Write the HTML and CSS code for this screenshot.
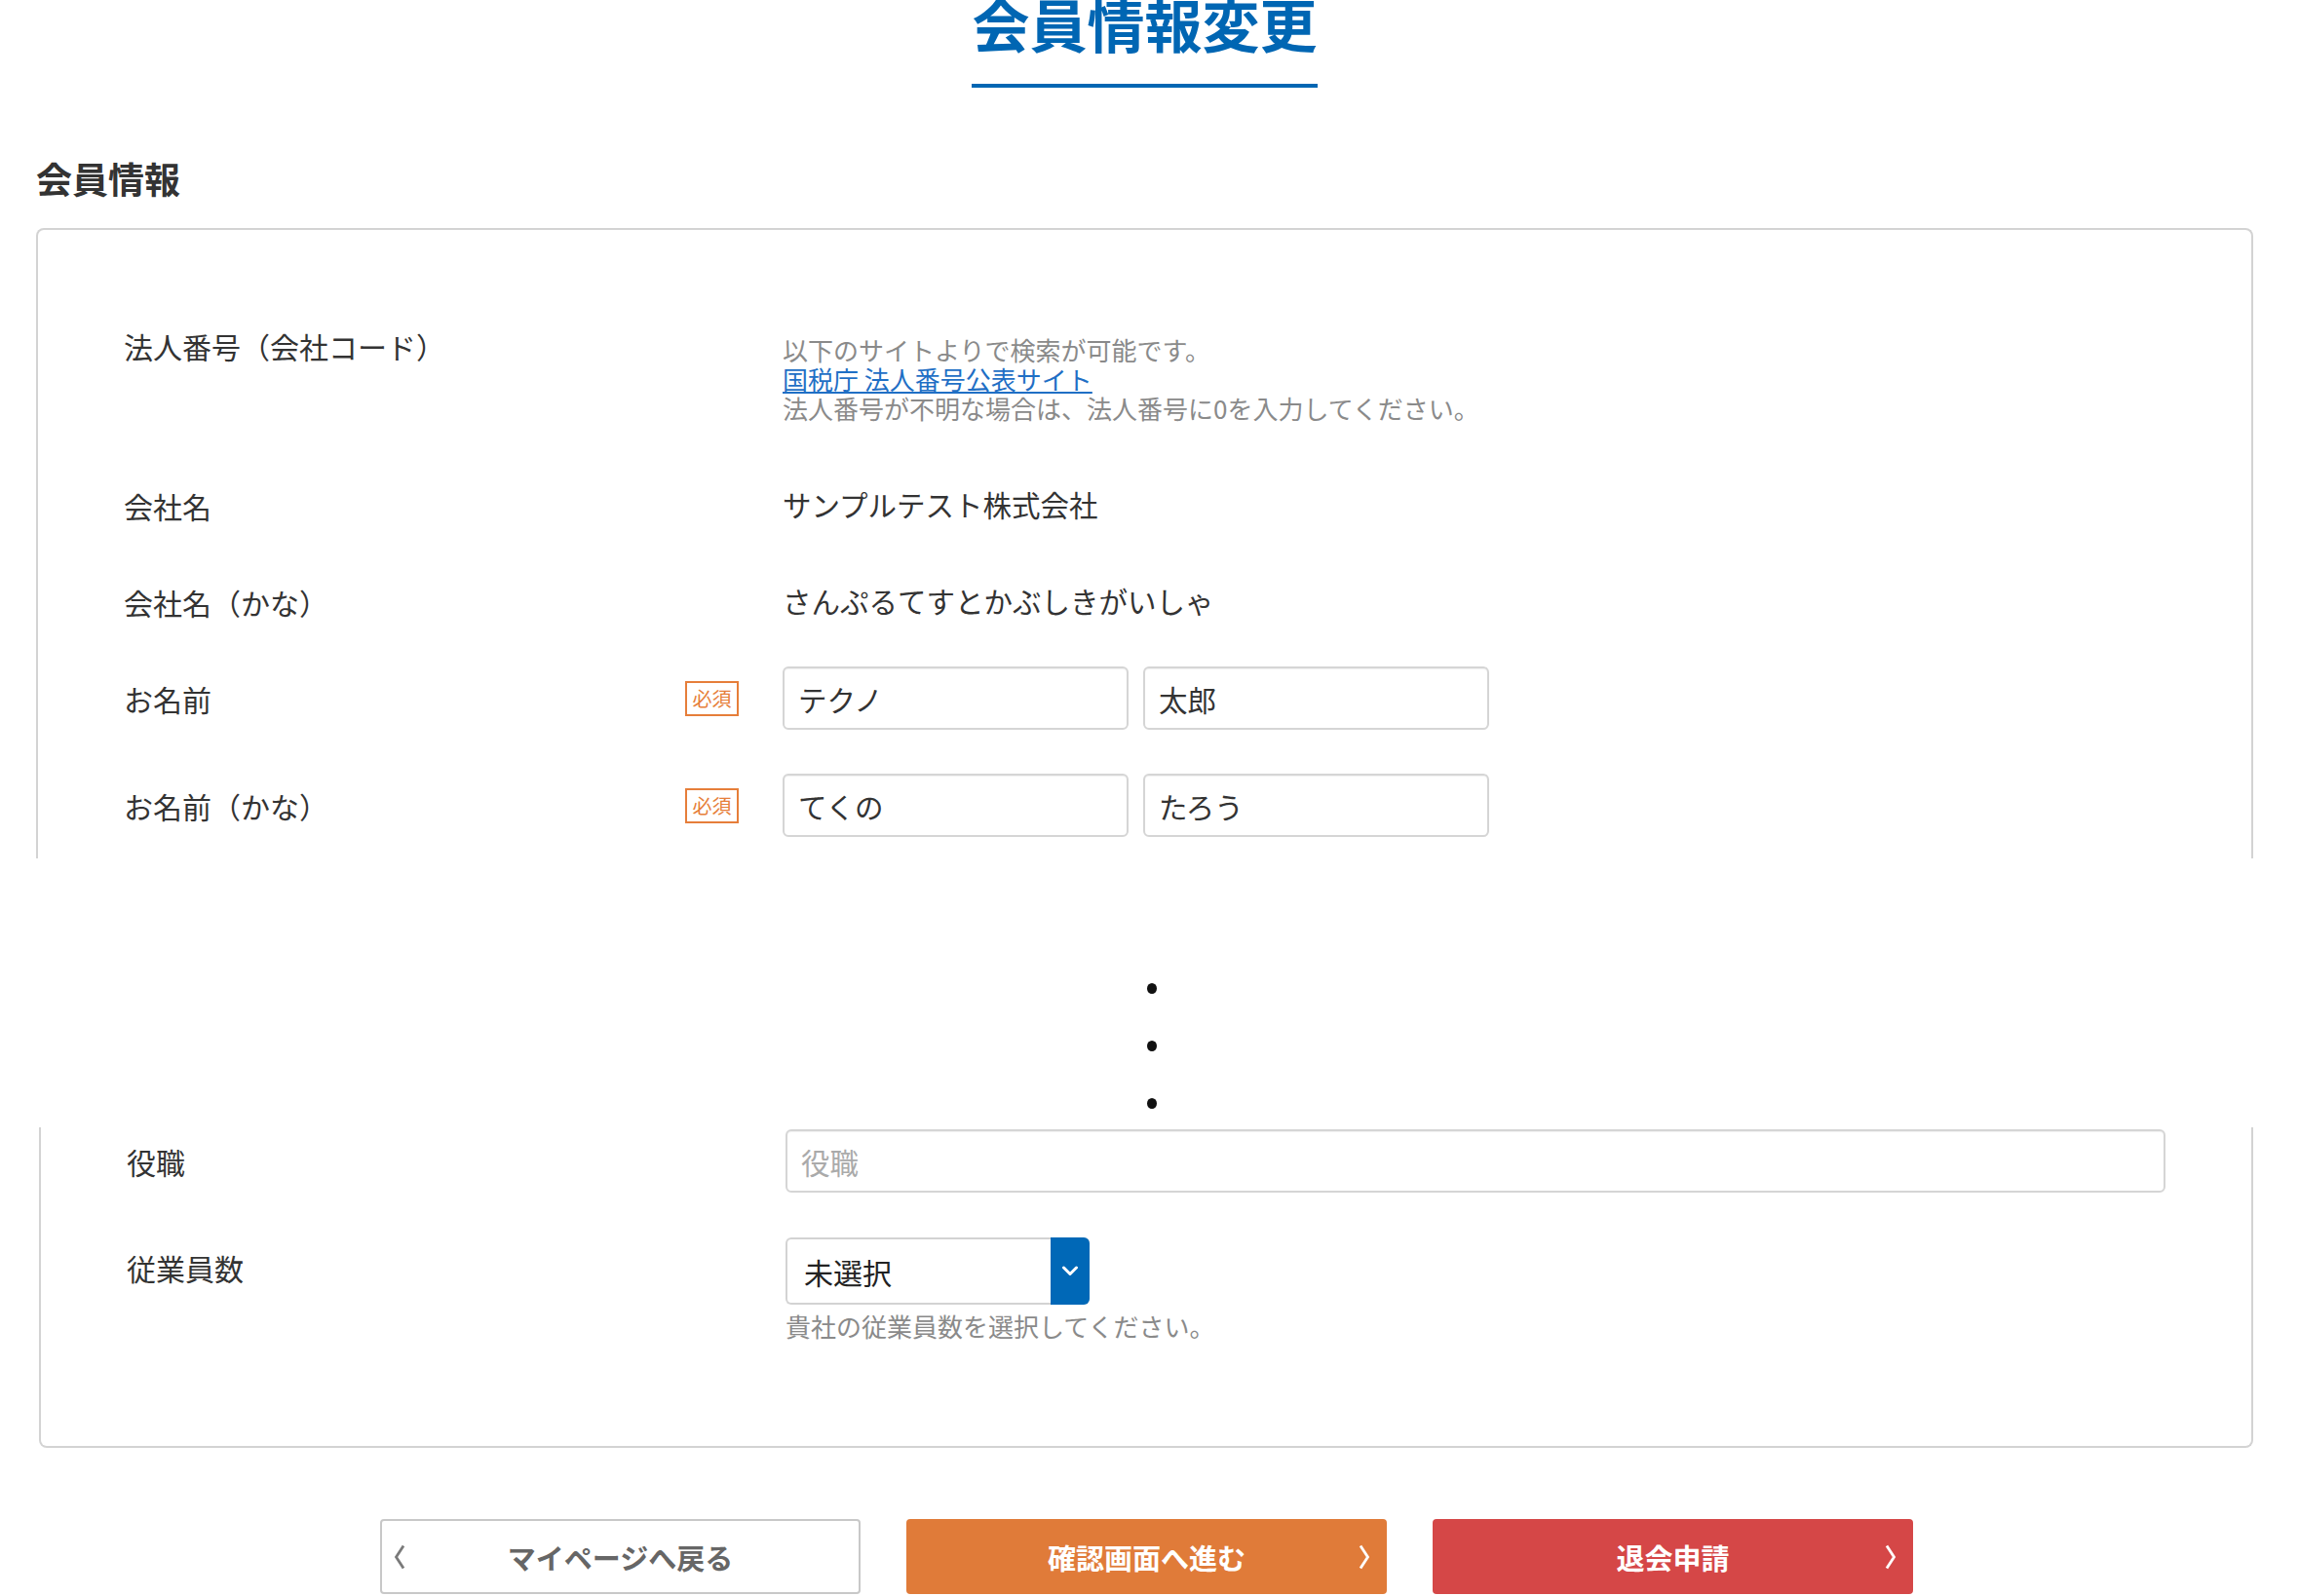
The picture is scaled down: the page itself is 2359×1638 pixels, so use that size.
FILE: index.html
```html
<!DOCTYPE html>
<html lang="ja">
<head>
<meta charset="utf-8">
<title>会員情報変更</title>
<link rel="stylesheet" href="styles.css">
</head>
<body>
<div class="page">
  <header class="page-head">
    <h1 class="page-title">会員情報変更</h1>
  </header>

  <h2 class="section-title">会員情報</h2>

  <section class="panel panel--top">
    <div class="row row--top row--first">
      <div class="label-col"><span class="label">法人番号（会社コード）</span></div>
      <div class="value-col note-block">
        <p class="note">以下のサイトよりで検索が可能です。</p>
        <p class="note"><a class="link" href="#">国税庁 法人番号公表サイト</a></p>
        <p class="note">法人番号が不明な場合は、法人番号に0を入力してください。</p>
      </div>
    </div>

    <div class="row">
      <div class="label-col"><span class="label">会社名</span></div>
      <div class="value-col"><span class="value">サンプルテスト株式会社</span></div>
    </div>

    <div class="row">
      <div class="label-col"><span class="label">会社名（かな）</span></div>
      <div class="value-col"><span class="value">さんぷるてすとかぶしきがいしゃ</span></div>
    </div>

    <div class="row">
      <div class="label-col"><span class="label">お名前</span><span class="badge">必須</span></div>
      <div class="value-col name-inputs">
        <input class="text-input" type="text" value="テクノ">
        <input class="text-input" type="text" value="太郎">
      </div>
    </div>

    <div class="row row--loose">
      <div class="label-col"><span class="label">お名前（かな）</span><span class="badge">必須</span></div>
      <div class="value-col name-inputs">
        <input class="text-input" type="text" value="てくの">
        <input class="text-input" type="text" value="たろう">
      </div>
    </div>
  </section>

  <div class="omission">
    <span class="dot"></span>
    <span class="dot"></span>
    <span class="dot"></span>
  </div>

  <section class="panel panel--bottom">
    <div class="row">
      <div class="label-col"><span class="label">役職</span></div>
      <div class="value-col">
        <input class="text-input text-input--wide" type="text" placeholder="役職">
      </div>
    </div>

    <div class="row row--top row--select">
      <div class="label-col label-col--offset"><span class="label">従業員数</span></div>
      <div class="value-col">
        <div class="select">
          <span class="select-text">未選択</span>
          <span class="select-arrow">
            <svg class="select-chevron" viewBox="0 0 18 11"><polyline points="2.5,2 9,8.5 15.5,2" fill="none" stroke="#fff" stroke-width="3" stroke-linecap="round" stroke-linejoin="round"/></svg>
          </span>
        </div>
        <p class="note select-note">貴社の従業員数を選択してください。</p>
      </div>
    </div>
  </section>

  <div class="actions">
    <a class="btn btn--back" href="#">
      <svg class="btn-arrow btn-arrow--left" viewBox="0 0 12 26"><polyline points="10,1.5 2.5,13 10,24.5" fill="none" stroke="#7a7a7a" stroke-width="2.8"/></svg>
      <span class="btn-text">マイページへ戻る</span>
      <span></span>
    </a>
    <a class="btn btn--confirm" href="#">
      <span></span>
      <span class="btn-text">確認画面へ進む</span>
      <svg class="btn-arrow btn-arrow--right" viewBox="0 0 12 26"><polyline points="2,1.5 9.5,13 2,24.5" fill="none" stroke="#fff" stroke-width="2.8"/></svg>
    </a>
    <a class="btn btn--withdraw" href="#">
      <span></span>
      <span class="btn-text">退会申請</span>
      <svg class="btn-arrow btn-arrow--right" viewBox="0 0 12 26"><polyline points="2,1.5 9.5,13 2,24.5" fill="none" stroke="#fff" stroke-width="2.8"/></svg>
    </a>
  </div>
</div>
</body>
</html>
```

FILE: styles.css
```css
* {
  box-sizing: border-box;
}

html,
body {
  margin: 0;
  padding: 0;
  background: #fff;
}

body {
  font-family: "Noto Sans CJK JP", "Noto Sans", sans-serif;
  color: #333;
}

.page {
  margin-left: 37px;
  width: 2275px;
}

.page-head {
  display: flex;
  justify-content: center;
}

.page-title {
  margin: 0;
  font-size: 59px;
  line-height: 48px;
  font-weight: 700;
  color: #0066b3;
  padding-bottom: 38px;
  border-bottom: 4px solid #0066b3;
}

.section-title {
  margin: 75px 0 0;
  font-size: 37px;
  line-height: 37px;
  font-weight: 700;
  color: #333;
}

.panel {
  display: flex;
  flex-direction: column;
  border: 2px solid #d3d3d3;
  background: #fff;
}

.panel--top {
  margin-top: 32px;
  border-bottom: none;
  border-radius: 8px 8px 0 0;
  padding: 104px 88px 22px;
}

.panel--bottom {
  margin-left: 3px;
  border-top: none;
  border-radius: 0 0 8px 8px;
  padding: 2px 88px 108px;
}

.row {
  display: flex;
  align-items: center;
  min-height: 65px;
}

.row + .row {
  margin-top: 34px;
}

.row--top {
  align-items: flex-start;
}

.row--first {
  min-height: 0;
  margin-bottom: 18px;
}

.row + .row--loose {
  margin-top: 45px;
}

.row + .row--select {
  margin-top: 46px;
}

.label-col {
  width: 676px;
  flex: none;
  display: flex;
  align-items: center;
  justify-content: space-between;
  padding-right: 45px;
}

.label-col--offset {
  margin-top: 16px;
}

.label {
  font-size: 30px;
  line-height: 30px;
  color: #333;
}

.badge {
  width: 55px;
  height: 36px;
  border: 2px solid #e67e3a;
  color: #e67e3a;
  font-size: 20px;
  line-height: 32px;
  text-align: center;
  background: #fff;
}

.value-col {
  flex: 1;
  min-width: 0;
}

.value {
  font-size: 29.5px;
  line-height: 30px;
  color: #333;
}

.note-block {
  padding-top: 4px;
}

.note {
  margin: 0;
  font-size: 26px;
  line-height: 30px;
  color: #8a8a8a;
}

.link {
  color: #1f6fc5;
  text-decoration: underline;
}

.name-inputs {
  display: flex;
  gap: 15px;
}

.text-input {
  width: 355px;
  height: 65px;
  border: 2px solid #d5d5d5;
  border-radius: 6px;
  padding: 0 14px;
  font-family: inherit;
  font-size: 29.5px;
  color: #333;
  background: #fff;
  box-shadow: inset 0 1px 1px rgba(0, 0, 0, 0.06);
  outline: none;
}

.text-input--wide {
  width: 100%;
}

.text-input::placeholder {
  color: #aaa;
}

.select {
  display: flex;
  width: 312px;
  height: 69px;
  border: 2px solid #d3d3d3;
  border-right: none;
  border-radius: 6px;
  background: #fff;
}

.select-text {
  flex: 1;
  display: flex;
  align-items: center;
  padding-left: 17px;
  font-size: 30px;
  color: #222;
}

.select-arrow {
  width: 40px;
  margin: -2px 0;
  display: flex;
  align-items: center;
  justify-content: center;
  background: #0068b7;
  border-radius: 0 6px 6px 0;
}

.select-chevron {
  width: 18px;
  height: 11px;
}

.select-note {
  margin-top: 7px;
}

.omission {
  height: 276px;
  display: flex;
  flex-direction: column;
  align-items: center;
  gap: 48px;
  padding-top: 128px;
  padding-left: 15px;
}

.dot {
  width: 10px;
  height: 11px;
  border-radius: 50%;
  background: #111;
}

.actions {
  display: flex;
  justify-content: center;
  gap: 47px;
  margin-top: 73px;
  padding-left: 4px;
}

.btn {
  width: 493px;
  height: 77px;
  display: grid;
  grid-template-columns: 1fr auto 1fr;
  align-items: center;
  border-radius: 4px;
  font-size: 29px;
  font-weight: 700;
  text-decoration: none;
}

.btn--back {
  background: #fff;
  border: 2px solid #c8c8c8;
  color: #666;
}

.btn--confirm {
  background: #e07b39;
  color: #fff;
}

.btn--withdraw {
  background: #d54747;
  color: #fff;
}

.btn-text {
  line-height: 30px;
}

.btn-arrow {
  width: 12px;
  height: 26px;
}

.btn-arrow--left {
  justify-self: start;
  margin-left: 12px;
}

.btn-arrow--right {
  justify-self: end;
  margin-right: 17px;
}
```
